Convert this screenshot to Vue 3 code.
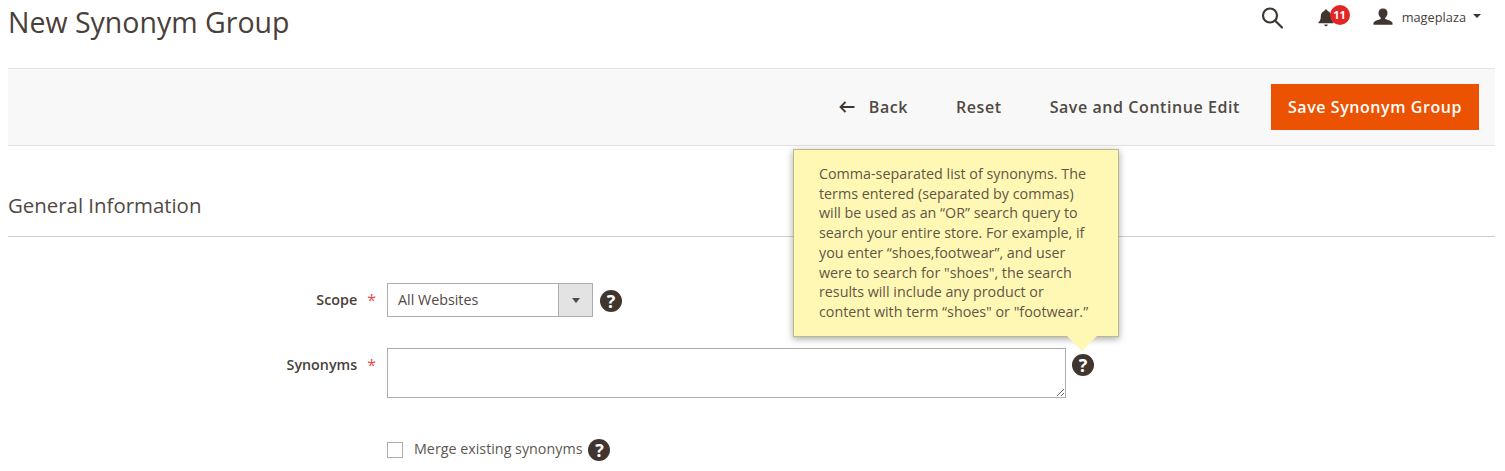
<script setup>
const tip = [
  'Comma-separated list of synonyms. The',
  'terms entered (separated by commas)',
  'will be used as an “OR” search query to',
  'search your entire store. For example, if',
  'you enter “shoes,footwear”, and user',
  'were to search for "shoes", the search',
  'results will include any product or',
  'content with term “shoes" or "footwear.”',
]
</script>

<template>
  <div class="page">
    <header class="top">
      <h1 class="title">New Synonym Group</h1>
      <div class="actions">
        <svg class="search" width="24" height="24" viewBox="0 0 24 24" fill="none" stroke="#41362f" stroke-width="2.2">
          <circle cx="10" cy="9.5" r="7" />
          <path d="M15 14.500l7 7" stroke-linecap="round" />
        </svg>
        <div class="bell">
          <svg width="16" height="18" viewBox="0 0 16 18" fill="#41362f">
            <path d="M8 0.500c1 0 1.500.7 1.600 1.600 2.400.7 3.600 2.800 3.600 5.400 0 3 .8 4.400 2.300 5.700v1H.5v-1C2 11.900 2.800 10.500 2.800 7.500c0-2.600 1.200-4.700 3.600-5.400C6.500 1.200 7 .5 8 .5zM6.300 15.500h3.400c0 1-.7 1.800-1.700 1.800s-1.700-.8-1.700-1.800z" />
          </svg>
          <span class="badge">11</span>
        </div>
        <div class="user">
          <svg class="user-icon" width="20" height="18" viewBox="0 0 20 20" preserveAspectRatio="none" fill="#41362f">
            <path d="M10 0.500c3 0 4.500 2.200 4.500 5 0 2.300-1 4.300-2.300 5.300v1.400c1.500.8 6.300 1.800 7.300 4.300v2H.5v-2c1-2.500 5.800-3.500 7.300-4.300v-1.400C6.500 9.800 5.500 7.800 5.500 5.500c0-2.800 1.500-5 4.500-5z" />
          </svg>
          <span class="username">mageplaza</span>
          <span class="caret"></span>
        </div>
      </div>
    </header>

    <div class="toolbar">
      <button class="link back">
        <svg width="16" height="12" viewBox="0 0 16 12" fill="none" stroke="#41362f" stroke-width="1.800">
          <path d="M15.500 6H1.500M6.500 1l-5 5 5 5" />
        </svg>
        Back
      </button>
      <button class="link">Reset</button>
      <button class="link">Save and Continue Edit</button>
      <button class="primary">Save Synonym Group</button>
    </div>

    <h2 class="section">General Information</h2>

    <form class="form" @submit.prevent>
      <div class="row scope">
        <label class="label">Scope<span class="star">*</span></label>
        <div class="select">
          <span class="value">All Websites</span>
          <span class="arrow"><i></i></span>
        </div>
        <span class="help">?</span>
      </div>
      <div class="row synonyms">
        <label class="label">Synonyms<span class="star">*</span></label>
        <textarea class="area"></textarea>
        <div class="help-wrap">
          <span class="help">?</span>
          <div class="tip">
            <div v-for="line in tip" :key="line">{{ line }}</div>
          </div>
        </div>
      </div>
      <div class="row merge">
        <span class="label"></span>
        <span class="check"></span>
        <span class="merge-text">Merge existing synonyms</span>
        <span class="help">?</span>
      </div>
    </form>
  </div>
</template>

<style>
html, body { margin: 0; background: #fff; overflow: hidden; }
</style>

<style scoped>
.page {
  width: 1487px;
  height: 471px;
  margin-left: 8px;
  font-family: "Open Sans", sans-serif;
  color: #41362f;
  overflow: hidden;
}
.top {
  height: 68px;
  display: flex;
  justify-content: space-between;
  box-sizing: border-box;
}
.title {
  margin: 4px 0 0;
  font-size: 28.500px;
  font-weight: 400;
  line-height: 36px;
  color: #4a403a;
}
.actions {
  display: flex;
  align-items: flex-start;
  padding: 6px 14px 0 0;
}
.bell { position: relative; margin: 3px 0 0 34px; width: 32px; height: 20px; }
.badge {
  position: absolute;
  left: 12px;
  top: -4px;
  width: 20px;
  height: 20px;
  border-radius: 50%;
  background: #e22626;
  color: #fff;
  font-size: 11px;
  font-weight: 700;
  line-height: 20px;
  text-align: center;
}
.user { display: flex; align-items: center; margin-left: 23px; height: 20px; }
.user-icon { margin-top: 2px; }
.username { margin-left: 9px; margin-top: 1px; font-size: 12.800px; color: #4a403a; }
.caret {
  margin-left: 7px;
  border-left: 4px solid transparent;
  border-right: 4px solid transparent;
  border-top: 4.500px solid #41362f;
}
.toolbar {
  height: 78px;
  box-sizing: border-box;
  background: #f8f8f8;
  border-top: 1px solid #e3e3e3;
  border-bottom: 1px solid #e3e3e3;
  display: flex;
  justify-content: flex-end;
  align-items: center;
  padding-right: 16px;
}
.link, .primary {
  font-family: inherit;
  font-size: 16px;
  font-weight: 600;
  border: 0;
  background: none;
  letter-spacing: 0.570px;
  padding: 0;
}
.link { color: #514943; margin-right: 48px; display: flex; align-items: center; }
.link:nth-child(3) { margin-right: 31px; }
.back svg { margin-right: 14px; }
.primary {
  width: 208px;
  height: 46px;
  background: #eb5202;
  color: #fff;
}
.section {
  margin: 44px 0 0;
  height: 46px;
  font-size: 20.400px;
  font-weight: 400;
  line-height: 31px;
  border-bottom: 1px solid #cccccc;
  color: #514943;
}
.form { padding-top: 46px; }
.row { display: flex; }
.label {
  width: 379px;
  flex: none;
  box-sizing: border-box;
  padding-right: 11px;
  text-align: right;
  font-size: 14.300px;
  font-weight: 600;
  line-height: 33px;
  color: #4a403a;
}
.star { color: #ea4a4a; margin-left: 10px; font-size: 16px; font-weight: 400; position: relative; top: 1px; }
.scope { height: 65px; align-items: flex-start; }
.select {
  width: 206px;
  height: 34px;
  box-sizing: border-box;
  border: 1px solid #adadad;
  display: flex;
  background: #fff;
}
.value {
  flex: 1;
  font-size: 14.300px;
  line-height: 32px;
  padding-left: 10px;
  color: #514943;
}
.arrow {
  width: 33px;
  background: #e3e3e3;
  border-left: 1px solid #adadad;
  display: flex;
  align-items: center;
  justify-content: center;
}
.arrow i {
  border-left: 4px solid transparent;
  border-right: 4px solid transparent;
  border-top: 5px solid #514943;
}
.help {
  display: block;
  width: 22px;
  height: 22px;
  border-radius: 50%;
  background: #41362f;
  color: #fff;
  font-size: 18px;
  font-weight: 700;
  line-height: 22px;
  text-align: center;
  flex: none;
}
.scope .help { margin: 7px 0 0 7px; }
.synonyms { height: 91px; }
.area {
  width: 679px;
  height: 50px;
  box-sizing: border-box;
  border: 1px solid #adadad;
  margin: 0;
  display: block;
  background: #fff;
  outline: none;
}
.help-wrap { position: relative; flex: none; width: 22px; margin: 6px 0 0 6px; height: 22px; }
.tip {
  position: absolute;
  right: -25px;
  bottom: 39px;
  width: 326px;
  height: 188px;
  box-sizing: border-box;
  padding: 14px 20px 0 25px;
  background: #fff8b5;
  border: 1px solid #bcb98f;
  box-shadow: 0 2px 7px rgba(0, 0, 0, 0.35);
  font-size: 14.300px;
  line-height: 19.700px;
  color: #5f5645;
  white-space: nowrap;
}
.tip::after {
  content: "";
  position: absolute;
  left: 273px;
  bottom: -15px;
  border-left: 15px solid transparent;
  border-right: 15px solid transparent;
  border-top: 15px solid #fff8b5;
}
.merge { align-items: center; height: 22px; }
.check {
  width: 16px;
  height: 16px;
  box-sizing: border-box;
  border: 1px solid #adadad;
  background: #fff;
}
.merge-text { margin-left: 11px; font-size: 14.300px; line-height: 20px; margin-top: -2px; color: #5f5751; }
.merge .help { margin-left: 6px; }
</style>
